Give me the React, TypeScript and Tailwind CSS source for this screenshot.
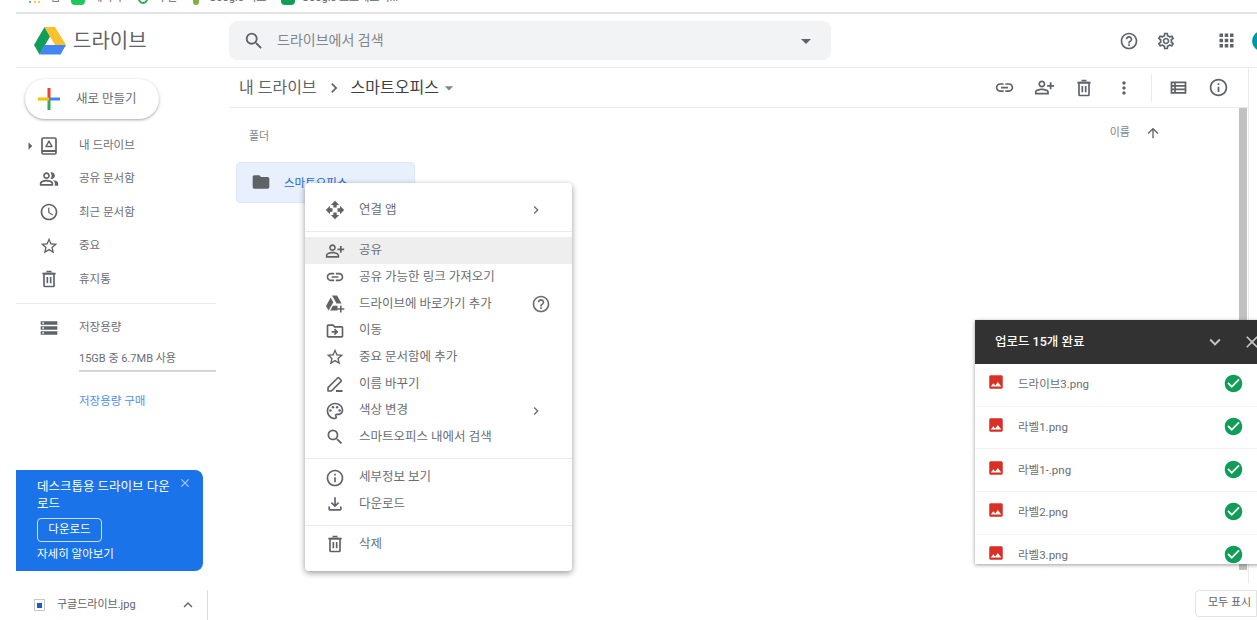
import type { ReactNode } from "react";
import {
  MdAccessTime,
  MdApps,
  MdArrowDropDown,
  MdArrowRight,
  MdArrowUpward,
  MdCheckCircle,
  MdChevronRight,
  MdClose,
  MdExpandLess,
  MdExpandMore,
  MdFolder,
  MdHelpOutline,
  MdImage,
  MdLink,
  MdMoreVert,
  MdOpenWith,
  MdOutlineDriveFileMove,
  MdOutlineFileDownload,
  MdOutlineInfo,
  MdOutlinePalette,
  MdOutlinePeopleAlt,
  MdOutlinePersonAddAlt,
  MdOutlineSettings,
  MdOutlineViewList,
  MdSearch,
  MdStarBorder,
  MdStorage,
} from "react-icons/md";

const fontStack = "font-['Roboto','Noto_Sans_CJK_KR',sans-serif]";

function DriveLogo() {
  return (
    <svg width="32" height="28" viewBox="0 0 32 28">
      <polygon points="10.5,0 16,9.5 5.5,27.5 0,18" fill="#0f9d58" />
      <polygon points="10.5,0 21,0 32,18 21,18" fill="#fbc02d" />
      <polygon points="10.5,18 32,18 26.5,27.5 5.5,27.5" fill="#4285f4" />
    </svg>
  );
}

function PlusIcon() {
  return (
    <svg width="22" height="22" viewBox="0 0 22 22">
      <rect x="9.5" y="0" width="3" height="11" fill="#ea4335" />
      <rect x="9.5" y="11" width="3" height="11" fill="#34a853" />
      <rect x="0" y="9.5" width="11" height="3" fill="#fbbc04" />
      <rect x="11" y="9.5" width="11" height="3" fill="#4285f4" />
    </svg>
  );
}

// 내 드라이브 icon: a book shape with the drive triangle inside
function MyDriveIcon() {
  return (
    <svg width="20" height="20" viewBox="0 0 20 20" fill="none">
      <rect x="3" y="2" width="14" height="16" rx="1.2" stroke="#5f6368" strokeWidth="1.7" />
      <path d="M3 15h14" stroke="#5f6368" strokeWidth="2" />
      <path d="M10 5.2l3 5.3H7z" stroke="#5f6368" strokeWidth="1.4" strokeLinejoin="round" />
    </svg>
  );
}

function ShortcutIcon() {
  return (
    <svg width="20" height="20" viewBox="0 0 20 20" fill="#5f6368">
      <path d="M7 1.5h5l4.5 8h-5z" />
      <path d="M5.7 3.6l2.6 4.6-4.7 8.3L1 12z" />
      <path d="M5.2 16.5l2.7-4.8h4.6v4.8z" />
      <path d="M15 11.5h1.6v2.7h2.7v1.6h-2.7v2.7H15v-2.7h-2.7v-1.6H15z" />
    </svg>
  );
}

function TrashIcon({ size = 20 }: { size?: number }) {
  return (
    <svg width={size} height={size} viewBox="0 0 24 24" fill="none" stroke="#5f6368" strokeWidth="2">
      <path d="M4 5.5h16M9 3h6" />
      <rect x="6" y="5.5" width="12" height="15.5" rx="1" />
      <path d="M10 9.5v7.5M14 9.5v7.5" />
    </svg>
  );
}

function RenameIcon() {
  return (
    <svg width="20" height="20" viewBox="0 0 20 20" fill="none" stroke="#5f6368" strokeWidth="1.6">
      <path d="M3 17v-3.4L12.6 4a1 1 0 0 1 1.4 0l2 2a1 1 0 0 1 0 1.4L6.4 17z" strokeLinejoin="round" />
      <path d="M11 17h6.5" strokeWidth="2" />
    </svg>
  );
}

function NavItem({ icon, label, caret }: { icon: ReactNode; label: string; caret?: boolean }) {
  return (
    <div className="relative flex h-[33.4px] items-center gap-5 pl-[23px] text-[11.5px] text-[#6a6e73]">
      {caret && (
        <span className="absolute left-[5px] text-[#5f6368]">
          <MdArrowRight size={18} />
        </span>
      )}
      <span className="flex w-5 justify-center text-[#5f6368]">{icon}</span>
      <span>{label}</span>
    </div>
  );
}

function MenuRow({
  icon,
  label,
  hover,
  right,
}: {
  icon: ReactNode;
  label: string;
  hover?: boolean;
  right?: ReactNode;
}) {
  return (
    <div
      className={`flex h-[26.7px] items-center gap-[14px] pl-5 text-[12.5px] text-[#6a6e73] ${
        hover ? "bg-[#eeeeee]" : ""
      }`}
    >
      <span className="flex w-5 justify-center text-[#5f6368]">{icon}</span>
      <span>{label}</span>
      {right}
    </div>
  );
}

const submenuArrow = (
  <span className="ml-auto pr-7">
    <MdChevronRight size={16} />
  </span>
);

const uploads = ["드라이브3.png", "라벨1.png", "라벨1-.png", "라벨2.png", "라벨3.png"];

export default function App() {
  return (
    <div className={`relative flex h-[620px] w-[1257px] flex-col overflow-hidden bg-white ${fontStack}`}>
      {/* bookmarks bar, cut off at the top of the capture */}
      <div className="ml-[16px] h-[14px] shrink-0 overflow-hidden border-b-2 border-[#e3e3e3]">
        <div className="-mt-[12px] flex h-5 items-center pl-[13px] text-[11px] text-[#5f6368]">
          <span className="grid w-3 grid-cols-3 gap-[2px]">
            {["#ea4335", "#fbbc04", "#34a853", "#ea4335", "#fbbc04", "#34a853", "#34a853", "#fbbc04", "#fbbc04"].map(
              (c, i) => (
                <span key={i} className="h-[2px] w-[2px] rounded-full" style={{ background: c }} />
              ),
            )}
          </span>
          <span className="ml-[9px]">앱</span>
          <span className="ml-[11px] h-[14px] w-[14px] rounded-sm bg-[#1ec85a]" />
          <span className="ml-[7px]">체리자</span>
          <span className="ml-[15px] h-[12px] w-[10px] rounded-full border-2 border-[#34a853]" />
          <span className="ml-[10px]">구글</span>
          <span className="ml-[15px] h-[14px] w-[6px] rounded-b-full bg-[#7cb342]" />
          <span className="ml-[10px]">Google 지도</span>
          <span className="ml-[15px] h-[14px] w-[14px] rounded-sm bg-[#0f9d58]" />
          <span className="ml-[6px]">Google 스프레드시...</span>
        </div>
      </div>

      {/* header */}
      <div className="ml-[16px] flex h-[54px] shrink-0 items-center border-b border-[#e8eaed]">
        <div className="flex w-[213px] shrink-0 items-center gap-[7px] pl-[18px]">
          <DriveLogo />
          <span className="text-[20px] text-[#5f6368]">드라이브</span>
        </div>
        <div className="flex h-[39px] w-[602px] shrink-0 items-center rounded-lg bg-[#f1f3f4] pl-[14px] pr-[13px] text-[#5f6368]">
          <MdSearch size={22} />
          <span className="ml-[12px] text-[14px] text-[#80868b]">드라이브에서 검색</span>
          <span className="ml-auto">
            <MdArrowDropDown size={24} />
          </span>
        </div>
        <div className="ml-[288px] flex shrink-0 items-center text-[#5f6368]">
          <MdHelpOutline size={20} />
          <span className="ml-[17px]">
            <MdOutlineSettings size={20} />
          </span>
          <span className="ml-[40px]">
            <MdApps size={21} />
          </span>
          <span className="ml-[15px] h-5 w-5 shrink-0 rounded-full bg-[#0097a7]" />
        </div>
      </div>

      <div className="flex min-h-0 flex-1">
        {/* sidebar */}
        <div className="ml-[16px] flex w-[213px] shrink-0 flex-col">
          <div className="ml-[9px] mt-[11px] flex h-10 w-[134px] shrink-0 items-center gap-4 rounded-full bg-white pl-[13px] text-[12.5px] text-[#6a6e73] shadow-[0_1px_3px_rgba(0,0,0,0.35)]">
            <PlusIcon />
            <span>새로 만들기</span>
          </div>
          <div className="mt-[10px]">
            <NavItem caret icon={<MyDriveIcon />} label="내 드라이브" />
            <NavItem icon={<MdOutlinePeopleAlt size={22} />} label="공유 문서함" />
            <NavItem icon={<MdAccessTime size={22} />} label="최근 문서함" />
            <NavItem icon={<MdStarBorder size={22} />} label="중요" />
            <NavItem icon={<TrashIcon />} label="휴지통" />
          </div>
          <div className="mt-[7px] h-px w-[200px] bg-[#e8eaed]" />
          <div className="mt-[7px]">
            <NavItem icon={<MdStorage size={22} />} label="저장용량" />
          </div>
          <div className="ml-[63px] mt-[6px] w-[137px]">
            <div className="text-[11px] leading-[17px] text-[#6a6e73]">15GB 중 6.7MB 사용</div>
            <div className="mt-[3px] h-[2px] bg-[#d4d6d9]" />
            <div className="mt-[21px] text-[11.5px] text-[#4f8fe8]">저장용량 구매</div>
          </div>

          <div className="relative mb-[12px] mt-auto h-[101px] w-[187px] rounded-r-lg bg-[#1a73e8] pl-[21px] pt-[8px] text-white">
            <span className="absolute left-[162px] top-[6px] text-[#a9cbf7]">
              <MdClose size={14} />
            </span>
            <div className="w-[140px] text-[12.5px] leading-[17px]">데스크톱용 드라이브 다운로드</div>
            <div className="mt-[6px] flex h-[24px] w-[65px] items-center justify-center rounded border border-[#cfe1fa] text-[11.5px]">
              다운로드
            </div>
            <div className="mt-[4px] text-[11.5px]">자세히 알아보기</div>
          </div>
        </div>

        {/* main column */}
        <div className="flex w-[1020px] shrink-0 flex-col border-r border-[#e8eaed]">
          <div className="flex h-10 shrink-0 items-center border-b border-[#e8eaed] pl-[10px] pr-[10px]">
            <span className="text-[16px] text-[#5f6368]">내 드라이브</span>
            <span className="ml-[7px] text-[#5f6368]">
              <MdChevronRight size={20} />
            </span>
            <span className="ml-[7px] text-[16px] text-[#3c4043]">스마트오피스</span>
            <span className="text-[#80868b]">
              <MdArrowDropDown size={20} />
            </span>
            <div className="ml-auto flex items-center text-[#5f6368]">
              <span className="flex w-10 justify-center">
                <MdLink size={21} />
              </span>
              <span className="flex w-10 justify-center">
                <MdOutlinePersonAddAlt size={21} />
              </span>
              <span className="flex w-10 justify-center">
                <TrashIcon />
              </span>
              <span className="flex w-10 justify-center">
                <MdMoreVert size={20} />
              </span>
              <span className="flex w-[14px] justify-center">
                <span className="h-7 w-px bg-[#e8eaed]" />
              </span>
              <span className="flex w-10 justify-center">
                <MdOutlineViewList size={21} />
              </span>
              <span className="flex w-10 justify-center">
                <MdOutlineInfo size={21} />
              </span>
            </div>
          </div>
          <div className="flex min-h-0 flex-1">
            <div className="flex-1 pl-[7px] pt-[15px]">
              <div className="flex justify-between pl-[13px] pr-[78px] text-[11px] text-[#80868b]">
                <span className="mt-[6px]">폴더</span>
                <span className="mt-[2px] flex h-4 items-center gap-[15px]">
                  <span>이름</span>
                  <span className="text-[#5f6368]">
                    <MdArrowUpward size={16} />
                  </span>
                </span>
              </div>
              <div className="mt-[16px] flex h-[41px] w-[179px] items-center gap-[13px] rounded border border-[#dfe7f7] bg-[#e8f0fe] pl-[14px] text-[11.5px] text-[#1967d2]">
                <span className="text-[#5f6368]">
                  <MdFolder size={20} />
                </span>
                <span className="mt-[3px]">스마트오피스</span>
              </div>
            </div>
            <div className="mr-px w-2 shrink-0">
              <div className="h-[462px] bg-[#c1c1c1]" />
            </div>
          </div>
        </div>
      </div>

      {/* download shelf */}
      <div className="ml-[16px] flex h-[37px] shrink-0 items-end">
        <div className="flex h-[30px] w-[192px] items-center border-r border-[#dadce0] pl-[18px] text-[11px] text-[#5f6368]">
          <span className="relative h-[12px] w-[11px] border border-[#c4c7cc] bg-white">
            <span className="absolute left-[2px] top-[3px] h-[5px] w-[5px] bg-[#1a5fb4]" />
          </span>
          <span className="ml-[12px] mt-[1px]">구글드라이브.jpg</span>
          <span className="ml-auto mr-[10px]">
            <MdExpandLess size={18} />
          </span>
        </div>
        <div className="mb-[3px] ml-auto flex h-[27px] w-[62px] items-center rounded-l border border-[#e3e3e3] pl-[12px] text-[11px] text-[#5f6368]">
          모두 표시
        </div>
      </div>

      {/* context menu */}
      <div className="absolute left-[305px] top-[183px] h-[388px] w-[267px] rounded bg-white pt-[14px] shadow-[0_2px_6px_rgba(0,0,0,0.4)]">
        <MenuRow icon={<MdOpenWith size={20} />} label="연결 앱" right={submenuArrow} />
        <div className="mt-[7px] h-px bg-[#e8eaed]" />
        <div className="mt-[5.5px]">
          <MenuRow hover icon={<MdOutlinePersonAddAlt size={20} />} label="공유" />
          <MenuRow icon={<MdLink size={20} />} label="공유 가능한 링크 가져오기" />
          <MenuRow
            icon={<ShortcutIcon />}
            label="드라이브에 바로가기 추가"
            right={
              <span className="ml-auto pr-[21px]">
                <MdHelpOutline size={20} />
              </span>
            }
          />
          <MenuRow icon={<MdOutlineDriveFileMove size={20} />} label="이동" />
          <MenuRow icon={<MdStarBorder size={20} />} label="중요 문서함에 추가" />
          <MenuRow icon={<RenameIcon />} label="이름 바꾸기" />
          <MenuRow icon={<MdOutlinePalette size={20} />} label="색상 변경" right={submenuArrow} />
          <MenuRow icon={<MdSearch size={20} />} label="스마트오피스 내에서 검색" />
        </div>
        <div className="mt-[7.5px] h-px bg-[#e8eaed]" />
        <div className="mt-[5px]">
          <MenuRow icon={<MdOutlineInfo size={20} />} label="세부정보 보기" />
          <MenuRow icon={<MdOutlineFileDownload size={20} />} label="다운로드" />
        </div>
        <div className="mt-[7px] h-px bg-[#e8eaed]" />
        <div className="mt-[5px]">
          <MenuRow icon={<TrashIcon />} label="삭제" />
        </div>
      </div>

      {/* upload progress panel */}
      <div className="absolute left-[975px] top-[320px] h-[244px] w-[290px] overflow-hidden bg-white shadow-[0_1px_4px_rgba(0,0,0,0.4)]">
        <div className="flex h-[44px] items-center bg-[#323232] pl-5 text-[12.5px] font-medium text-white">
          <span>업로드 15개 완료</span>
          <span className="ml-[120px] text-[#c4c7c5]">
            <MdExpandMore size={22} />
          </span>
          <span className="ml-[16px] text-[#c4c7c5]">
            <MdClose size={20} />
          </span>
        </div>
        {uploads.map((name) => (
          <div key={name} className="flex h-[42.7px] w-full items-center border-b border-[#f1f3f4] pl-3 text-[11.5px] text-[#6a6e73]">
            <span className="-mt-[5px] text-[#d93025]">
              <MdImage size={18} />
            </span>
            <span className="ml-[13px]">{name}</span>
            <span className="-mt-[2px] ml-auto pr-[21px] text-[#0f9d58]">
              <MdCheckCircle size={21} />
            </span>
          </div>
        ))}
      </div>
    </div>
  );
}
